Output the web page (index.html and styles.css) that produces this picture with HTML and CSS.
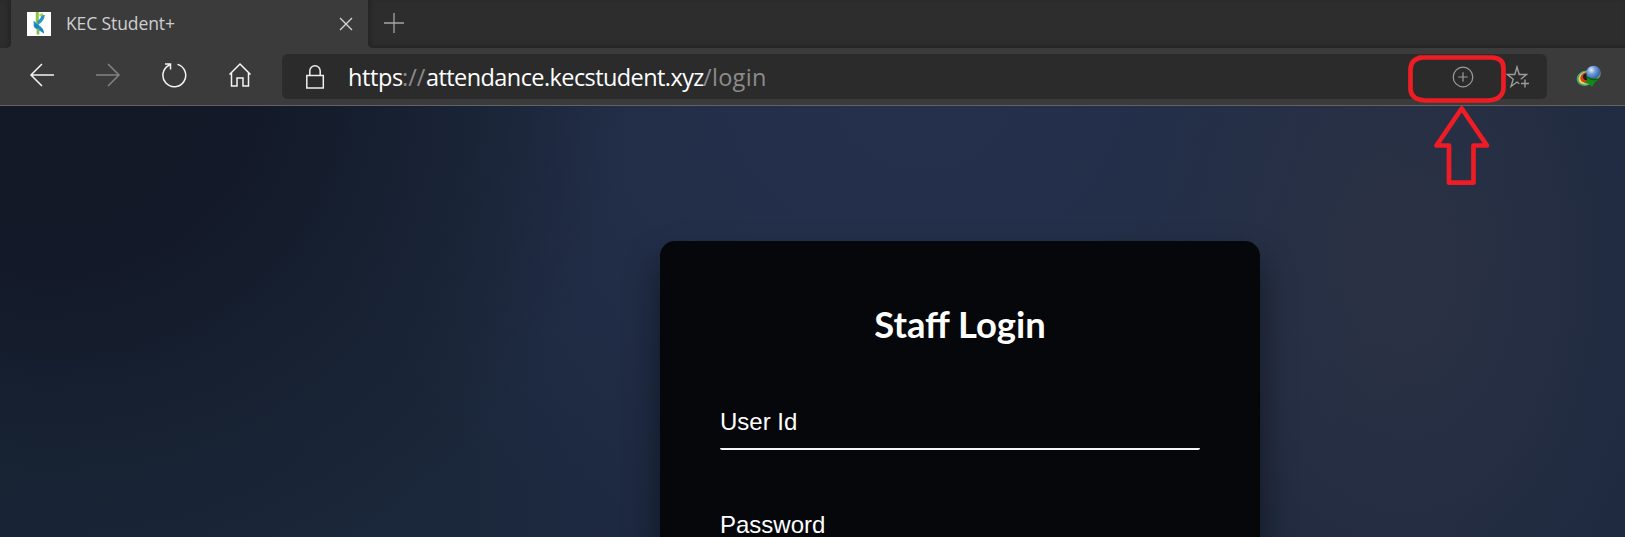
FILE: index.html
```html
<!DOCTYPE html>
<html lang="en">
<head>
<meta charset="utf-8">
<title>KEC Student+</title>
<link rel="stylesheet" href="styles.css">
</head>
<body>
<div class="browser">
  <header class="tabstrip">
    <div class="tab-prev"></div>
    <div class="tab">
      <svg class="favicon" viewBox="0 0 24 24"><rect width="24" height="24" fill="#fff"/><path d="M10.300 0v13" fill="none" stroke="#8cc63f" stroke-width="3"/><path d="M16 3c0 4-2 6-5.500 8" fill="none" stroke="#2f97c8" stroke-width="3.400"/><path d="M12.500 3.500l3.500-1.500" stroke="#b4d34a" stroke-width="2"/><path d="M7.200 9.500c2 4 9 4.500 9.300 11.500-3-3.500-8.500-3.500-9.300-7z" fill="#1784c9" stroke="#1784c9" stroke-width="1"/><path d="M11 16.500v6" stroke="#7dbb42" stroke-width="2.600"/></svg>
      <span class="tab-title">KEC Student+</span>
      <svg class="close" viewBox="0 0 14 14"><path d="M1 1l12 12M13 1L1 13"/></svg>
    </div>
    <div class="tab-rest">
      <svg class="new-tab" viewBox="0 0 20 20"><path d="M10 0v20M0 10h20"/></svg>
    </div>
  </header>
  <nav class="toolbar">
    <svg class="icon back" viewBox="0 0 26 26"><path d="M25 13H2M13 2L2 13l11 11"/></svg>
    <svg class="icon forward" viewBox="0 0 26 26"><path d="M1 13h23M13 2l11 11-11 11"/></svg>
    <svg class="icon" viewBox="0 0 26 26"><path d="M16.500 2.400A11.400 11.400 0 1 1 8.500 3M4 2h5.500v5.500"/></svg>
    <svg class="icon" viewBox="0 0 26 26"><path d="M2.500 12.500L13 2l10.500 10.500M4.500 11v13H10v-8h6v8h5.500V11"/></svg>
    <div class="address">
      <svg class="lock" viewBox="0 0 20 26"><path d="M1.800 11.500h16.500v12.500H1.800zM4.800 11.500V7a5.200 5.200 0 0 1 10.400 0v4.500"/></svg>
      <div class="url"><span class="scheme">https</span><span class="dim sep">://</span><span class="host">attendance.kecstudent.xyz</span><span class="dim path">/login</span></div>
      <div class="actions">
        <svg class="install" viewBox="0 0 22 22"><circle cx="11" cy="11" r="9.800"/><path d="M11 6.300v9.400M6.300 11h9.400"/></svg>
        <svg class="star" viewBox="0 0 24 24"><path d="M14.800 14.200l5.700-4.700h-7.300L11 2 8.800 9.500H1.500l5.700 4.700L5 21.500l6-4.500 2.300 1.700M19 14.500v8M15 18.500h8"/></svg>
      </div>
    </div>
    <svg class="extension" viewBox="0 0 26 24">
      <defs>
        <radialGradient id="globe" cx=".35" cy=".3" r=".8"><stop offset="0" stop-color="#e8f0fa"/><stop offset=".35" stop-color="#6f9ed8"/><stop offset=".75" stop-color="#3466a8"/><stop offset="1" stop-color="#c4c74d"/></radialGradient>
      </defs>
      <g transform="rotate(-20 10 13)"><ellipse cx="9.500" cy="13" rx="9" ry="7.500" fill="#40a08b"/><ellipse cx="10" cy="13" rx="7.700" ry="6.300" fill="#e8d53c"/><ellipse cx="10.700" cy="12.500" rx="6.300" ry="5" fill="#c8402a"/><ellipse cx="12" cy="12" rx="4.600" ry="3.500" fill="#271a1a"/></g>
      <circle cx="17.500" cy="8" r="7.300" fill="url(#globe)"/>
      <path d="M10 11l5 2.500 8.500.5-4.500 3-3 5-2.500-3-5.500-1 3.500-2.500z" fill="#128a16"/><path d="M11 12l5 2.500 7-.3" fill="none" stroke="#075c0c" stroke-width="1.300"/>
    </svg>
  </nav>
  <main class="page">
    <section class="card">
      <h1>Staff Login</h1>
      <label class="field">User Id</label>
      <label class="field">Password</label>
    </section>
  </main>
  <svg class="callout" viewBox="0 0 104 136">
    <path d="M15.500 5.500H88Q99.500 6 99.500 16V36Q99 47.500 84 48.500H21Q7 47.500 6.500 37V17Q7 6.500 18.500 5.500Z"/>
    <path d="M57.700 56.500L32.500 93.500h12.500v37.200h24.500V93.500H83z"/>
  </svg>
</div>
</body>
</html>
```
FILE: styles.css
```css
* { box-sizing: border-box; }
body { margin: 0; overflow: hidden; background: #1a2436; }
svg { display: block; flex: none; fill: none; }
.browser {
  position: relative;
  display: flex;
  flex-direction: column;
  width: 1625px;
  height: 537px;
  overflow: hidden;
}
.tabstrip { display: flex; flex: none; height: 48px; background: #3b3b3b; }
.tab-prev {
  width: 11px;
  background: #2d2d2d;
  border-bottom-right-radius: 5px;
  box-shadow: inset -4px 0 4px -2px #242424;
}
.tab {
  display: flex;
  align-items: center;
  width: 357px;
  padding: 0 15px 0 16px;
  background: #3b3b3b;
  border-radius: 5px 5px 0 0;
}
.favicon { width: 24px; height: 24px; }
.tab-title {
  flex: 1;
  margin: 0 0 2px 15px;
  font: 17.5px/24px "Open Sans", "Noto Sans", sans-serif;
  letter-spacing: -0.1px;
  color: #cfcfcf;
  white-space: nowrap;
}
.close { width: 14px; height: 14px; stroke: #d4d4d4; stroke-width: 1.4; }
.tab-rest {
  flex: 1;
  padding: 13px 16px;
  background: #2d2d2d;
  border-bottom-left-radius: 5px;
  box-shadow: inset 0 -4px 4px -2px #262626, inset 4px 0 4px -2px #242424;
}
.new-tab { width: 20px; height: 20px; stroke: #a5a5a5; stroke-width: 1.3; }
.toolbar {
  display: flex;
  flex: none;
  align-items: center;
  height: 58px;
  padding: 0 23px 0 29px;
  border-bottom: 1px solid #606264;
  background: #3b3b3b;
}
.icon { width: 26px; height: 26px; margin: 0 40px 3px 0; stroke: #f4f4f4; stroke-width: 1.5; }
.icon.forward { stroke: #828282; }
.address {
  display: flex;
  align-items: center;
  width: 1265px;
  height: 45px;
  margin-left: -11px;
  padding: 0 17px 0 23px;
  border-radius: 6px;
  background: #2b2b2b;
}
.lock { width: 20px; height: 26px; stroke: #eee; stroke-width: 1.5; }
.url {
  display: flex;
  margin-left: 23px;
  font: 23.5px/32px "Open Sans", "Noto Sans", sans-serif;
  color: #fff;
  white-space: nowrap;
}
.scheme { width: 54px; letter-spacing: -0.4px; }
.sep { width: 24px; }
.host { width: 277px; letter-spacing: -0.58px; }
.path { letter-spacing: 0.3px; }
.dim { color: #8b8b8b; }
.actions { display: flex; align-items: center; gap: 32px; margin-left: auto; }
.install { width: 22px; height: 22px; stroke: #9c9c9c; stroke-width: 1.2; }
.star { width: 24px; height: 24px; stroke: #9c9c9c; stroke-width: 1.4; }
.extension { width: 26px; height: 24px; margin-left: auto; }
.page {
  flex: 1;
  min-height: 0;
  padding: 135px 0 0 660px;
  background:
    radial-gradient(ellipse 260px 400px at 1405px 160px, rgba(44, 50, 69, .9) 0%, rgba(42, 49, 69, .65) 45%, rgba(36, 47, 70, 0) 100%),
    radial-gradient(ellipse 580px 540px at 50px -30px, #131826 0%, #131928 35%, rgba(21, 30, 46, .75) 62%, rgba(27, 38, 60, 0) 100%),
    radial-gradient(ellipse 640px 480px at 920px 0, #25314c 0%, rgba(36, 48, 75, .9) 35%, rgba(31, 43, 68, 0) 100%),
    linear-gradient(90deg, #1a2739 0%, #1b273a 28%, #1d2940 36%, #202a3f 75%, #1f2a40 100%);
}
.card {
  width: 600px;
  height: 500px;
  padding: 59px 60px 60px;
  border-radius: 15px;
  background: #05070b;
  box-shadow: 0 20px 36px rgba(0, 0, 0, .48);
}
h1 {
  margin: 0 0 46px;
  font: bold 36.4px/48px Lato, sans-serif;
  color: #fff;
  text-align: center;
}
.field {
  display: block;
  height: 56px;
  margin-bottom: 47px;
  padding-top: 14px;
  border-bottom: 2px solid #f4f6f8;
  border-radius: 2px;
  font: 24px/28px "Liberation Sans", Arial, sans-serif;
  color: #fff;
}
.callout {
  position: absolute;
  left: 1404px;
  top: 52px;
  width: 104px;
  height: 136px;
  stroke: #ee1c24;
  stroke-width: 4.7;
  stroke-linejoin: round;
}
```
